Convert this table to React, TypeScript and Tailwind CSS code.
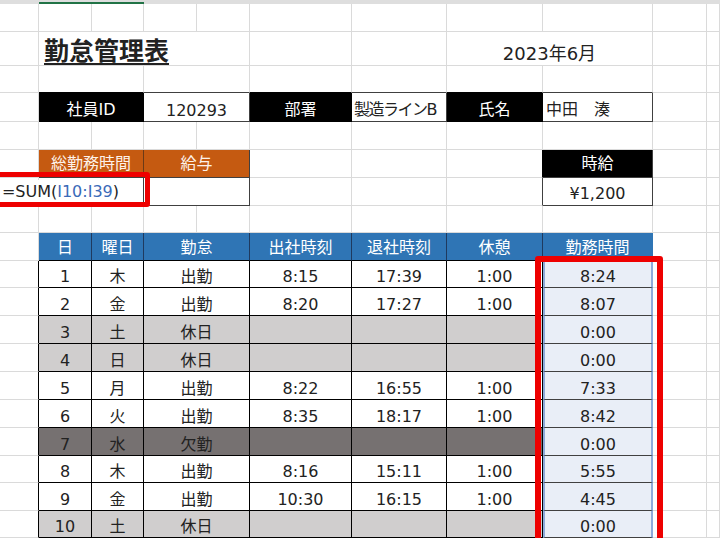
import React from "react";

const G = "border-r-[#dadada] border-b-[#dadada]";
const FONT = "font-['DejaVu_Sans','Noto_Sans_CJK_JP',sans-serif]";

function Cell({ className = "", children }: { className?: string; children?: React.ReactNode }) {
  return <div className={`flex min-w-0 items-center border-r border-b ${className}`}>{children}</div>;
}

type Day = { d: number; w: string; k: string; a?: string; b?: string; r?: string; t: string };

const days: Day[] = [
  { d: 1, w: "木", k: "出勤", a: "8:15", b: "17:39", r: "1:00", t: "8:24" },
  { d: 2, w: "金", k: "出勤", a: "8:20", b: "17:27", r: "1:00", t: "8:07" },
  { d: 3, w: "土", k: "休日", t: "0:00" },
  { d: 4, w: "日", k: "休日", t: "0:00" },
  { d: 5, w: "月", k: "出勤", a: "8:22", b: "16:55", r: "1:00", t: "7:33" },
  { d: 6, w: "火", k: "出勤", a: "8:35", b: "18:17", r: "1:00", t: "8:42" },
  { d: 7, w: "水", k: "欠勤", t: "0:00" },
  { d: 8, w: "木", k: "出勤", a: "8:16", b: "15:11", r: "1:00", t: "5:55" },
  { d: 9, w: "金", k: "出勤", a: "10:30", b: "16:15", r: "1:00", t: "4:45" },
  { d: 10, w: "土", k: "休日", t: "0:00" },
];

const bgFor = (k: string) =>
  k === "休日" ? "bg-[#d0cece]" : k === "欠勤" ? "bg-[#767171]" : "bg-white";

function Blank({ n }: { n: number }) {
  return (
    <>
      {Array.from({ length: n }).map((_, i) => (
        <Cell key={i} className={G} />
      ))}
    </>
  );
}

export default function App() {
  const T = "border-r-black border-b-black justify-center pt-[6px]";
  const HD = "border-r-[#1f3a5f] border-b-black bg-[#2f75b5] text-white justify-center pt-[2px]";
  const DK = "border-r-[#404040] border-b-[#404040]";

  return (
    <div className={`relative h-[538px] w-[720px] overflow-hidden bg-white text-[16px] text-[#222] ${FONT}`}>
      {/* column header strip */}
      <div className="flex h-1 flex-col justify-end bg-[#dedede]">
        <div className="ml-[39px] h-[2px] w-[105px] bg-[#217346]" />
      </div>

      <div className="grid grid-cols-[39px_53px_52px_53px_53px_102px_95px_96px_110px_54px_1fr] grid-rows-[28px_34px_27px_29px_28px_28px_28px_27px_28px_27px_28px_28px_28px_28px_28px_28px_27px_28px_27px]">
        {/* row 1 */}
        <Blank n={11} />

        {/* row 2: title */}
        <Cell className={G} />
        <Cell className={`col-span-4 pl-[5px] pt-[3px] ${G}`}>
          <span className="whitespace-nowrap font-['Noto_Sans_CJK_JP',sans-serif] text-[25px] font-bold underline decoration-[2px] underline-offset-[3px]">
            勤怠管理表
          </span>
        </Cell>
        <Blank n={2} />
        <Cell className={`col-span-2 justify-center pt-[9px] text-[18px] ${G}`}>2023年6月</Cell>
        <Blank n={2} />

        {/* row 3 */}
        <Cell className={G} />
        <Cell className="col-span-2 border-r-[#dadada] border-b-black" />
        <Cell className="col-span-2 border-r-[#dadada] border-b-[#404040]" />
        <Cell className="border-r-[#dadada] border-b-black" />
        <Cell className="border-r-[#dadada] border-b-[#404040]" />
        <Cell className="border-r-[#dadada] border-b-black" />
        <Cell className="border-r-[#dadada] border-b-[#404040]" />
        <Blank n={2} />

        {/* row 4: employee */}
        <Cell className={G} />
        <Cell className="col-span-2 justify-center border-r-black border-b-black bg-black pt-[6px] text-white">社員ID</Cell>
        <Cell className={`col-span-2 justify-center pt-[8px] ${DK}`}>120293</Cell>
        <Cell className="justify-center border-r-black border-b-black bg-black pt-[6px] text-white">部署</Cell>
        <Cell className={`whitespace-nowrap pl-[2px] pt-[6px] tracking-[-1.5px] ${DK}`}>製造ラインB</Cell>
        <Cell className="justify-center border-r-black border-b-black bg-black pt-[6px] text-white">氏名</Cell>
        <Cell className={`pl-[3px] pt-[6px] ${DK}`}>中田　湊</Cell>
        <Blank n={2} />

        {/* row 5 */}
        <Blank n={11} />

        {/* row 6: totals header */}
        <Cell className={G} />
        <Cell className="col-span-2 justify-center border-r-[#6b3a17] border-b-[#404040] bg-[#c55a11] pt-[1px] text-[#fdf2ea]">総勤務時間</Cell>
        <Cell className="col-span-2 justify-center border-r-[#404040] border-b-[#404040] bg-[#c55a11] pt-[1px] text-[#fdf2ea]">給与</Cell>
        <Cell className={G} />
        <Cell className={G} />
        <Cell className="border-r-black border-b-[#dadada]" />
        <Cell className="justify-center border-r-[#404040] border-b-[#404040] bg-black pt-[1px] text-white">時給</Cell>
        <Blank n={2} />

        {/* row 7: totals values */}
        <Cell className={G} />
        <Cell className={`col-span-2 justify-end overflow-visible pr-[24px] ${DK}`}>
          <span className="whitespace-nowrap bg-white">
            =SUM(<span className="text-[#3a6ab8]">I10:I39</span>)
          </span>
        </Cell>
        <Cell className={`col-span-2 ${DK}`} />
        <Cell className={G} />
        <Cell className={G} />
        <Cell className="border-r-[#404040] border-b-[#dadada]" />
        <Cell className={`justify-center pt-[4px] ${DK}`}>¥1,200</Cell>
        <Blank n={2} />

        {/* row 8 */}
        <Blank n={11} />

        {/* row 9: table header */}
        <Cell className={G} />
        <Cell className={HD}>日</Cell>
        <Cell className={HD}>曜日</Cell>
        <Cell className={`col-span-2 ${HD}`}>勤怠</Cell>
        <Cell className={HD}>出社時刻</Cell>
        <Cell className={HD}>退社時刻</Cell>
        <Cell className={HD}>休憩</Cell>
        <Cell className="justify-center border-r-[#2f75b5] border-b-black bg-[#2f75b5] pt-[2px] text-white">勤務時間</Cell>
        <Blank n={2} />

        {/* data rows */}
        {days.map((row) => {
          const bg = bgFor(row.k);
          return (
            <React.Fragment key={row.d}>
              <Cell className="border-r-black border-b-[#dadada]" />
              <Cell className={`${T} ${bg}`}>{row.d}</Cell>
              <Cell className={`${T} ${bg}`}>{row.w}</Cell>
              <Cell className={`col-span-2 ${T} ${bg}`}>{row.k}</Cell>
              <Cell className={`${T} ${bg}`}>{row.a}</Cell>
              <Cell className={`${T} ${bg}`}>{row.b}</Cell>
              <Cell className={`${T} ${bg}`}>{row.r}</Cell>
              <div className="flex items-center justify-center border-b border-l-2 border-r-2 border-b-[#404040] border-l-[#8eaadb] border-r-[#8eaadb] bg-[#e9eef7] pt-[6px]">
                {row.t}
              </div>
              <Blank n={2} />
            </React.Fragment>
          );
        })}
      </div>

      {/* red highlight boxes */}
      <div className="absolute left-[-10px] top-[172px] h-[35px] w-[160px] rounded-[3px] border-[5px] border-[#ee0000]" />
      <div className="absolute left-[535px] top-[256px] h-[320px] w-[128px] rounded-[3px] border-[6px] border-[#ee0000]" />
    </div>
  );
}
